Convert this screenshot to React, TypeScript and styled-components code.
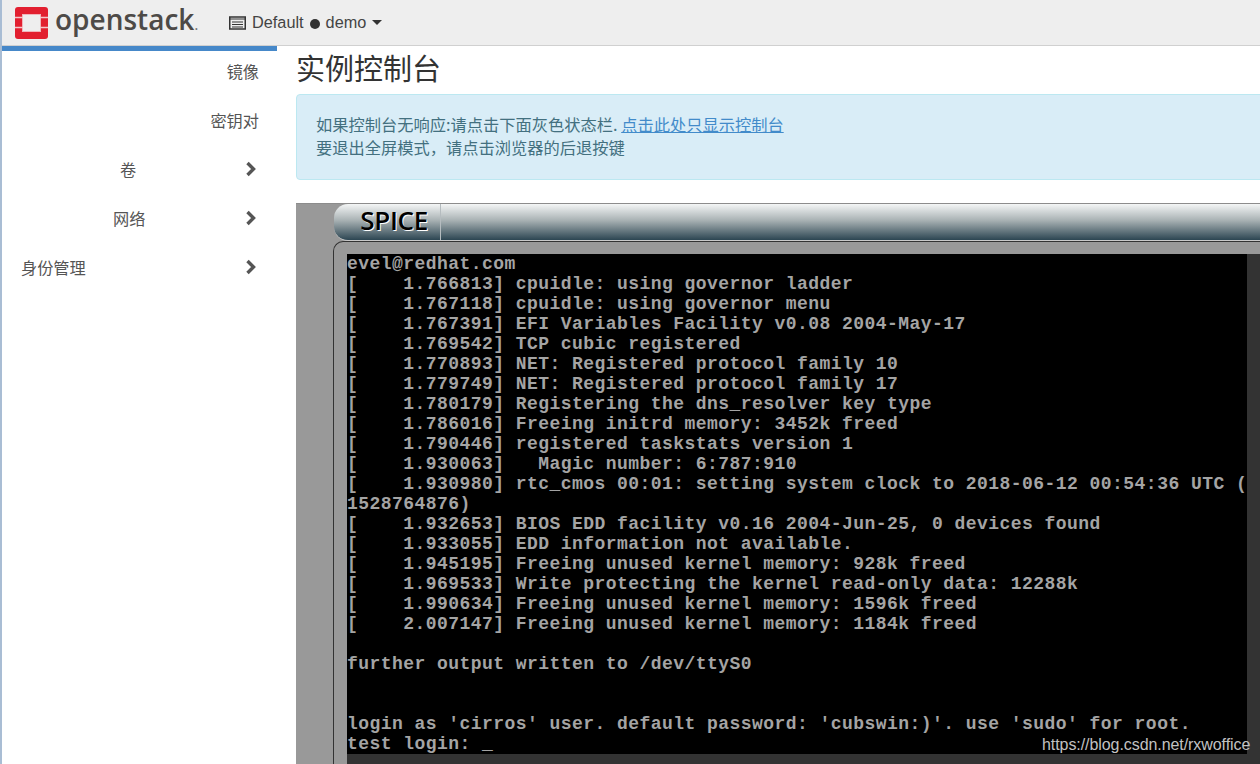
import React from "react";
import styled, { createGlobalStyle } from "styled-components";

const Global = createGlobalStyle`
  html, body { margin: 0; padding: 0; background: #fff; overflow: hidden; }
  body { width: 1260px; height: 764px; font-family: "Liberation Sans", "Noto Sans CJK SC", sans-serif; color: #444; }
`;
const Page = styled.div`
  width: 1260px; height: 764px; overflow: hidden; display: flex; flex-direction: column;
  border-left: 2px solid #a9bdd4; box-sizing: border-box;
`;
const TopBar = styled.header`
  flex: none; height: 46px; box-sizing: border-box; background: #eeeeee;
  border-bottom: 1px solid #d0d0d0; display: flex; align-items: center; padding-left: 13px;
`;
const Brand = styled.div`
  display: flex; align-items: center; width: 214px; flex: none;
`;
const LogoWord = styled.span`
  font-family: "Open Sans", "Liberation Sans", sans-serif; font-size: 28px; font-weight: 600; letter-spacing: 0;
  color: #4d4a47; margin-left: 7px; line-height: 32px; position: relative; top: -1px;
`;
const LogoDot = styled.span`
  font-size: 16px; font-weight: 400; color: #777;
`;
const Project = styled.div`
  display: flex; align-items: center; font-size: 16.3px; color: #444; gap: 6px;
`;
const Dot = styled.span`
  width: 10px; height: 10px; border-radius: 50%; background: #333; margin-top: 2px;
`;
const Caret = styled.span`
  width: 0; height: 0; border-left: 5px solid transparent; border-right: 5px solid transparent;
  border-top: 5px solid #333;
`;
const Body = styled.div`
  flex: 1; display: flex; min-height: 0;
`;
const Side = styled.nav`
  flex: none; width: 275px; border-top: 5px solid #4688c9; box-sizing: border-box;
`;
const NavRow = styled.div<{ $pad: number; $end?: boolean }>`
  height: 49px; display: flex; align-items: center; font-size: 16.2px; color: #555;
  padding: 0 20px 9px ${p => p.$pad}px; box-sizing: border-box;
  font-family: "Noto Sans CJK SC", sans-serif;
  justify-content: ${p => (p.$end ? "flex-end" : "space-between")};
`;
const EndLabel = styled.span`
  margin-right: -2px;
`;
const Main = styled.main`
  flex: 1; min-width: 0; padding-left: 19px; overflow: hidden;
`;
const Title = styled.h1`
  margin: 0; height: 48px; line-height: 42px; font-weight: 400; font-size: 29px; color: #333;
  font-family: "Noto Sans CJK SC", sans-serif; white-space: nowrap;
`;
const Alert = styled.div`
  width: 1000px; height: 86px; box-sizing: border-box; background: #d9edf7; border: 1px solid #bce8f1;
  border-radius: 4px; padding: 18px 19px; font-size: 16.25px; line-height: 23px; color: #43707f;
  font-family: "Noto Sans CJK SC", sans-serif; white-space: nowrap;
`;
const AlertLink = styled.a`
  color: #428bca; text-decoration: underline;
`;
const Spice = styled.section`
  margin-top: 23px; width: 1000px; height: 580px; background: #999; padding: 0 0 0 37px;
  box-sizing: border-box; border-top: 1px solid #8c8c8c; overflow: hidden;
`;
const SpiceBar = styled.div`
  height: 37px; margin-left: 1px; border-radius: 14px 0 0 14px; box-sizing: border-box; display: flex;
  background: linear-gradient(#f4f6f6 0%, #a9b2b4 45%, #2c4552 100%);
  border-bottom: 1px solid #c8c8c8;
`;
const SpiceName = styled.div`
  width: 107px; box-sizing: border-box; padding-right: 12px; text-align: right; font-size: 26px; line-height: 32px;
  font-weight: 600; color: #000; font-family: "Open Sans", "Liberation Sans", sans-serif; text-shadow: 1px 1px 0 #fff;
  border-right: 1px solid #b5bcbf; letter-spacing: -0.3px;
`;
const Screen = styled.div`
  height: 560px; box-sizing: border-box; border-top: 1px solid #333; border-left: 1px solid #333;
  border-top-left-radius: 10px; padding: 12px 0 0 13px; background: #999;
`;
const Display = styled.div`
  width: 1000px; height: 560px; background: #333;
`;
const Term = styled.div`
  width: 900px; height: 500px; background: #000; color: #a4a4a4; overflow: hidden;
  font-family: "Liberation Mono", monospace; font-weight: 700; font-size: 18px;
  letter-spacing: 0.45px;
`;
const TermLine = styled.div`
  height: 20px; line-height: 20px; white-space: pre;
`;
const Mark = styled.div`
  position: absolute; left: 1042px; top: 736px; font-size: 16px; letter-spacing: -0.07px; line-height: 18px; color: #c2c2c2;
  font-family: "Liberation Sans", sans-serif; white-space: nowrap;
`;
const Chevron = () => (
  <svg width="12" height="16" viewBox="0 0 12 16" aria-hidden="true">
    <path d="M2.5 2 L8.5 8 L2.5 14" fill="none" stroke="#555" strokeWidth="3.4" />
  </svg>
);
const lines = `evel@redhat.com
[    1.766813] cpuidle: using governor ladder
[    1.767118] cpuidle: using governor menu
[    1.767391] EFI Variables Facility v0.08 2004-May-17
[    1.769542] TCP cubic registered
[    1.770893] NET: Registered protocol family 10
[    1.779749] NET: Registered protocol family 17
[    1.780179] Registering the dns_resolver key type
[    1.786016] Freeing initrd memory: 3452k freed
[    1.790446] registered taskstats version 1
[    1.930063]   Magic number: 6:787:910
[    1.930980] rtc_cmos 00:01: setting system clock to 2018-06-12 00:54:36 UTC (
1528764876)
[    1.932653] BIOS EDD facility v0.16 2004-Jun-25, 0 devices found
[    1.933055] EDD information not available.
[    1.945195] Freeing unused kernel memory: 928k freed
[    1.969533] Write protecting the kernel read-only data: 12288k
[    1.990634] Freeing unused kernel memory: 1596k freed
[    2.007147] Freeing unused kernel memory: 1184k freed

further output written to /dev/ttyS0


login as 'cirros' user. default password: 'cubswin:)'. use 'sudo' for root.
test login: _`.split("\n");

export default function App() {
  return (
    <Page>
      <Global />
      <TopBar>
        <Brand>
          <svg width="33" height="32" viewBox="0 0 33 32" aria-hidden="true">
            <rect width="33" height="32" rx="3" fill="#e21f2f" />
            <rect x="7.5" y="7.5" width="18" height="17" fill="#eeeeee" stroke="#f0b6bb" strokeWidth="1" />
            <path d="M0 10.5 H8 M0 20.5 H8 M25 10.5 H33 M25 20.5 H33" stroke="#f3c6ca" strokeWidth="1.6" />
          </svg>
          <LogoWord>openstack<LogoDot>.</LogoDot></LogoWord>
        </Brand>
        <Project>
          <svg width="17" height="14" viewBox="0 0 17 14" aria-hidden="true">
            <rect x="0.75" y="1" width="15.5" height="12" fill="none" stroke="#333" strokeWidth="1.5" />
            <path d="M1 3 H16 M3 6 H14 M3 8.5 H14 M3 11 H14" stroke="#333" strokeWidth="1.2" />
          </svg>
          <span>Default</span>
          <Dot />
          <span>demo</span>
          <Caret />
        </Project>
      </TopBar>
      <Body>
        <Side>
          <NavRow $pad={0} $end><EndLabel>镜像</EndLabel></NavRow>
          <NavRow $pad={0} $end><EndLabel>密钥对</EndLabel></NavRow>
          <NavRow $pad={118}><span>卷</span><Chevron /></NavRow>
          <NavRow $pad={111}><span>网络</span><Chevron /></NavRow>
          <NavRow $pad={19}><span>身份管理</span><Chevron /></NavRow>
        </Side>
        <Main>
          <Title>实例控制台</Title>
          <Alert>
            如果控制台无响应:请点击下面灰色状态栏. <AlertLink>点击此处只显示控制台</AlertLink>
            <br />
            要退出全屏模式，请点击浏览器的后退按键
          </Alert>
          <Spice>
            <SpiceBar><SpiceName>SPICE</SpiceName></SpiceBar>
            <Screen>
              <Display>
                <Term>
                  {lines.map((line, i) => (
                    <TermLine key={i}>{line}</TermLine>
                  ))}
                </Term>
              </Display>
            </Screen>
          </Spice>
        </Main>
      </Body>
      <Mark>https://blog.csdn.net/rxwoffice</Mark>
    </Page>
  );
}
